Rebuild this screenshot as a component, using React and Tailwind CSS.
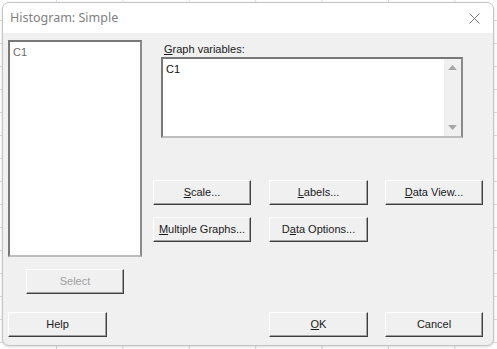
import React from "react";

const btn =
  "flex items-center justify-center h-[25px] bg-[#f0f0f0] border border-t-white border-l-white border-b-[#3f3f3f] border-r-[#3f3f3f] shadow-[inset_-1px_-1px_0_#a0a0a0] text-[11px] text-[#1a1a1a]";

const Btn = ({ className = "", children, disabled }) => (
  <button
    className={`${btn} ${className} ${disabled ? "text-[#a0a0a0]" : ""}`}
    disabled={disabled}
  >
    {children}
  </button>
);

const App = () => {
  return (
    <div
      className="w-[497px] h-[349px] pl-[2px] pt-[2px] bg-white bg-[linear-gradient(to_right,#d9d9d9_1px,transparent_1px),linear-gradient(to_bottom,#d9d9d9_1px,transparent_1px)] bg-[size:66.4px_23px] bg-[position:56px_20px] overflow-hidden"
      style={{ fontFamily: '"Liberation Sans", Arial, sans-serif' }}
    >
      <div className="w-[492px] h-[344px] rounded-[7px] border border-[#c4c4c4] bg-[#f0f0f0] flex flex-col overflow-hidden shadow-[0_1px_3px_rgba(0,0,0,0.15)]">
        {/* title bar */}
        <div className="h-[30px] bg-white flex items-center justify-between pl-[7px] pr-[9px] shrink-0">
          <span
            className="text-[12.5px] text-[#808080]"
            style={{ fontFamily: '"Noto Sans", "Open Sans", sans-serif' }}
          >
            Histogram: Simple
          </span>
          <svg width="11" height="11" viewBox="0 0 11 11" className="mr-[4px]">
            <path d="M0.5 0.5 L10.5 10.5 M10.5 0.5 L0.5 10.5" stroke="#7a7a7a" strokeWidth="1" />
          </svg>
        </div>

        {/* body */}
        <div className="flex-1 pl-[5px] pt-[7px] flex flex-col">
          <div className="flex">
            {/* left column */}
            <div className="w-[134px] flex flex-col">
              <div className="h-[217px] bg-white border-2 border-t-[#787878] border-l-[#787878] border-r-[#8a8a8a] border-b-[#bdbdbd] pl-[3px] pt-[2px] text-[11px] text-[#6a6a6a]">
                C1
              </div>
              <Btn className="w-[98px] ml-[18px] mt-[12px]" disabled>
                Select
              </Btn>
            </div>

            {/* right panel */}
            <div className="ml-[11px] flex flex-col">
              <div className="ml-[11px] mt-[2px] h-[15px] text-[11px] text-[#1a1a1a] leading-[15px]">
                <u>G</u>raph variables:
              </div>
              <div className="ml-[8px] w-[302px] h-[81px] bg-white border-2 border-t-[#787878] border-l-[#787878] border-r-[#8a8a8a] border-b-[#bdbdbd] flex">
                <div className="flex-1 pl-[3px] pt-[2px] text-[11px] text-[#111]">C1</div>
                <div className="w-[17px] bg-[#f0f0f0] flex flex-col items-center justify-between py-[6px]">
                  <svg width="9" height="5" viewBox="0 0 9 5">
                    <path d="M0 5 L4.5 0 L9 5 Z" fill="#a6a6a6" />
                  </svg>
                  <svg width="9" height="5" viewBox="0 0 9 5">
                    <path d="M0 0 L9 0 L4.5 5 Z" fill="#a6a6a6" />
                  </svg>
                </div>
              </div>
              <div className="flex mt-[42px]">
                <Btn className="w-[98px]">
                  <u>S</u>cale...
                </Btn>
                <Btn className="w-[99px] ml-[18px]">
                  <u>L</u>abels...
                </Btn>
                <Btn className="w-[98px] ml-[17px]">
                  <u>D</u>ata View...
                </Btn>
              </div>
              <div className="flex mt-[12px]">
                <Btn className="w-[98px]">
                  <u>M</u>ultiple Graphs...
                </Btn>
                <Btn className="w-[99px] ml-[18px]">
                  D<u>a</u>ta Options...
                </Btn>
              </div>
            </div>
          </div>

          {/* bottom row */}
          <div className="flex mt-[18px]">
            <Btn className="w-[99px] h-[24px]">Help</Btn>
            <Btn className="w-[99px] h-[24px] ml-[162px]">
              <u>O</u>K
            </Btn>
            <Btn className="w-[98px] h-[24px] ml-[17px]">Cancel</Btn>
          </div>
        </div>
      </div>
    </div>
  );
};

export default App;
